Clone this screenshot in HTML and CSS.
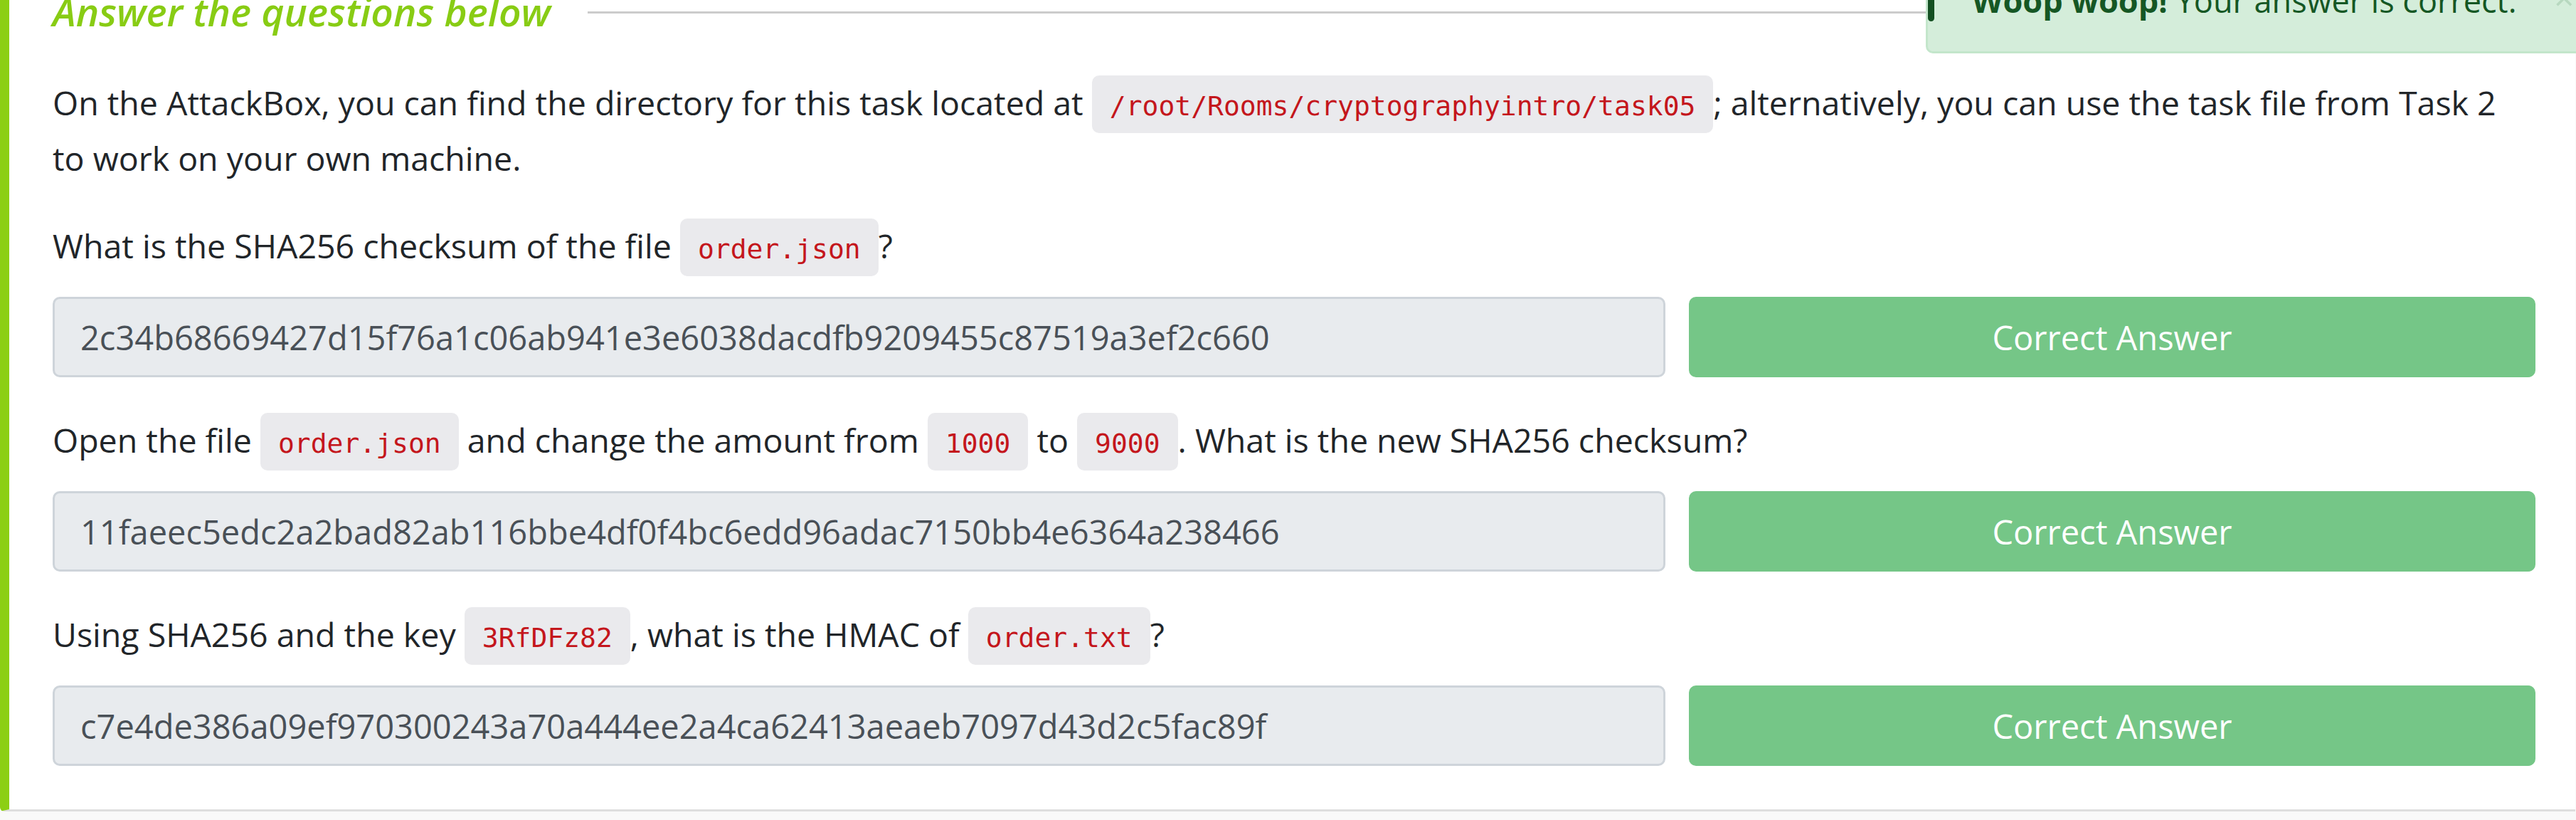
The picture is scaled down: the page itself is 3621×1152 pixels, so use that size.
FILE: index.html
```html
<!DOCTYPE html>
<html lang="en">
<head>
<meta charset="utf-8">
<title>Answer the questions below</title>
<link rel="stylesheet" href="styles.css">
</head>
<body>
<div class="viewport">
  <section class="card">
    <div class="head-row">
      <h5 class="heading">Answer the questions below</h5>
      <span class="rule"></span>
    </div>

    <p class="intro">On the AttackBox, you can find the directory for this task located at <code>/root/Rooms/cryptographyintro/task05</code>; alternatively, you can use the task file from Task 2<br>to work on your own machine.</p>

    <p class="question">What is the SHA256 checksum of the file <code>order.json</code>?</p>
    <div class="answer-row">
      <div class="answer">2c34b68669427d15f76a1c06ab941e3e6038dacdfb9209455c87519a3ef2c660</div>
      <button class="btn-correct" type="button">Correct Answer</button>
    </div>

    <p class="question">Open the file <code>order.json</code> and change the amount from <code>1000</code> to <code>9000</code>. What is the new SHA256 checksum?</p>
    <div class="answer-row">
      <div class="answer">11faeec5edc2a2bad82ab116bbe4df0f4bc6edd96adac7150bb4e6364a238466</div>
      <button class="btn-correct" type="button">Correct Answer</button>
    </div>

    <p class="question">Using SHA256 and the key <code>3RfDFz82</code>, what is the HMAC of <code>order.txt</code>?</p>
    <div class="answer-row">
      <div class="answer">c7e4de386a09ef970300243a70a444ee2a4ca62413aeaeb7097d43d2c5fac89f</div>
      <button class="btn-correct" type="button">Correct Answer</button>
    </div>
  </section>

  <div class="toast">
    <span class="toast-accent"></span>
    <span class="toast-text"><strong>Woop woop!</strong> Your answer is correct.</span>
    <span class="toast-close">×</span>
  </div>
</div>
</body>
</html>
```

FILE: styles.css
```css
html, body {
  margin: 0;
  padding: 0;
  background: #f9f9f9;
}

body {
  font-family: "Open Sans", "Noto Sans", sans-serif;
  color: #212529;
}

.viewport {
  position: relative;
  width: 3621px;
  height: 1152px;
  overflow: hidden;
}

.card {
  margin-top: -14px;
  margin-right: 1px;
  background: #ffffff;
  border-left: 13px solid #8ccf14;
  border-bottom: 3px solid #dedede;
  border-bottom-left-radius: 6px;
  padding: 0 56px 61px 61px;
  display: flex;
  flex-direction: column;
}

.head-row {
  display: flex;
  align-items: flex-start;
  gap: 52px;
  margin-bottom: 59px;
}

.heading {
  margin: 0;
  font-size: 55px;
  line-height: 60px;
  font-style: italic;
  font-weight: 600;
  color: #88cc14;
  white-space: nowrap;
}

.rule {
  flex: 1;
  height: 3px;
  margin-top: 30px;
  margin-right: -56px;
  background: #cccccc;
}

p {
  margin: 0;
  font-size: 46.5px;
  line-height: 78px;
}

.intro {
  margin-bottom: 45px;
  white-space: nowrap;
}

.question {
  margin-bottom: 33px;
}

code {
  font-family: "DejaVu Sans Mono", monospace;
  font-size: 38px;
  line-height: 1;
  color: #c4161c;
  background: #eaeaed;
  border-radius: 10px;
  padding: 21px 25px 16px;
}

.answer-row {
  display: flex;
  gap: 33px;
  height: 113px;
  margin-bottom: 49px;
}

.answer-row:last-child {
  margin-bottom: 0;
}

.answer {
  flex: 1;
  display: flex;
  align-items: center;
  box-sizing: border-box;
  padding: 0 36px;
  background: #e8ebee;
  border: 3px solid #ced4da;
  border-radius: 10px;
  color: #495057;
  font-size: 47px;
  white-space: nowrap;
}

.btn-correct {
  width: 1190px;
  border: 0;
  border-radius: 10px;
  background: #75c687;
  color: #ffffff;
  font-family: "Open Sans", "Noto Sans", sans-serif;
  font-size: 47px;
  padding: 0;
}

.toast {
  position: absolute;
  left: 2707px;
  top: -62px;
  width: 1000px;
  height: 137px;
  box-sizing: border-box;
  background: #d4edda;
  border: 3px solid #c3e6cb;
  border-radius: 10px;
  color: #155724;
  font-size: 45px;
  padding-left: 62px;
}

.toast-accent {
  position: absolute;
  left: 0;
  top: 0;
  width: 9px;
  height: 89px;
  background: #145022;
  border-bottom-right-radius: 6px;
  border-bottom-left-radius: 6px;
}

.toast-text {
  display: block;
  line-height: 60px;
  margin-top: 30px;
  white-space: nowrap;
}

.toast-text strong {
  font-weight: 700;
}

.toast-close {
  position: absolute;
  left: 880px;
  top: 30px;
  font-size: 50px;
  line-height: 1;
  color: #b7d8bf;
}
```
